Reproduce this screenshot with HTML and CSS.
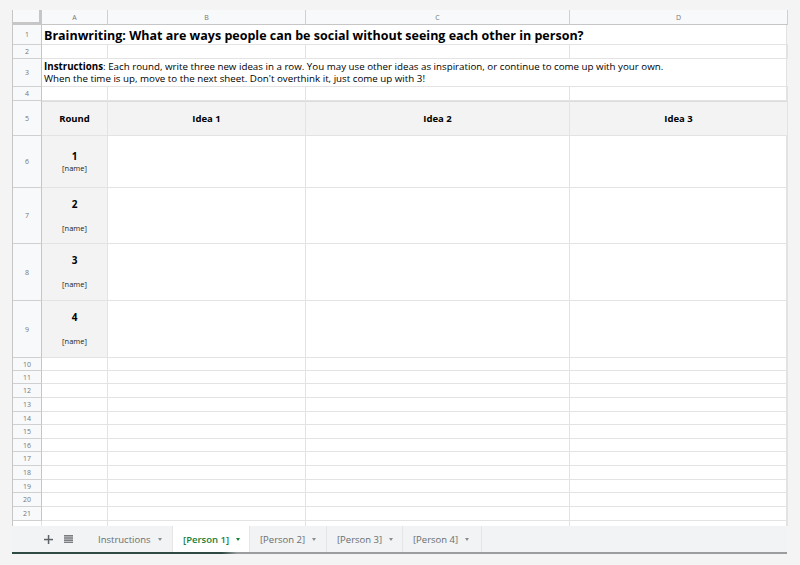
FILE: index.html
```html
<!DOCTYPE html>
<html>
<head>
<meta charset="utf-8">
<link rel="stylesheet" href="styles.css">
</head>
<body>
<div class="sheet">
  <div class="grid">
    <div class="corner"></div>
    <div class="ch">A</div><div class="ch">B</div><div class="ch">C</div><div class="ch">D</div>

    <div class="rh">1</div>
    <div class="c span title">Brainwriting: What are ways people can be social without seeing each other in person?</div>

    <div class="rh">2</div>
    <div class="c"></div><div class="c"></div><div class="c"></div><div class="c"></div>

    <div class="rh">3</div>
    <div class="c span instr"><b>Instructions</b>: Each round, write three new ideas in a row. You may use other ideas as inspiration, or continue to come up with your own.<br>When the time is up, move to the next sheet. Don't overthink it, just come up with 3!</div>

    <div class="rh">4</div>
    <div class="c"></div><div class="c"></div><div class="c"></div><div class="c"></div>

    <div class="rh">5</div>
    <div class="c hd">Round</div><div class="c hd">Idea 1</div><div class="c hd">Idea 2</div><div class="c hd">Idea 3</div>

    <div class="rh">6</div>
    <div class="c rnd"><b>1</b><span>[name]</span></div><div class="c"></div><div class="c"></div><div class="c"></div>

    <div class="rh">7</div>
    <div class="c rnd gap"><b>2</b><span>[name]</span></div><div class="c"></div><div class="c"></div><div class="c"></div>

    <div class="rh">8</div>
    <div class="c rnd gap"><b>3</b><span>[name]</span></div><div class="c"></div><div class="c"></div><div class="c"></div>

    <div class="rh">9</div>
    <div class="c rnd gap"><b>4</b><span>[name]</span></div><div class="c"></div><div class="c"></div><div class="c"></div>

    <div class="rh">10</div><div class="c"></div><div class="c"></div><div class="c"></div><div class="c"></div>
    <div class="rh">11</div><div class="c"></div><div class="c"></div><div class="c"></div><div class="c"></div>
    <div class="rh">12</div><div class="c"></div><div class="c"></div><div class="c"></div><div class="c"></div>
    <div class="rh">13</div><div class="c"></div><div class="c"></div><div class="c"></div><div class="c"></div>
    <div class="rh">14</div><div class="c"></div><div class="c"></div><div class="c"></div><div class="c"></div>
    <div class="rh">15</div><div class="c"></div><div class="c"></div><div class="c"></div><div class="c"></div>
    <div class="rh">16</div><div class="c"></div><div class="c"></div><div class="c"></div><div class="c"></div>
    <div class="rh">17</div><div class="c"></div><div class="c"></div><div class="c"></div><div class="c"></div>
    <div class="rh">18</div><div class="c"></div><div class="c"></div><div class="c"></div><div class="c"></div>
    <div class="rh">19</div><div class="c"></div><div class="c"></div><div class="c"></div><div class="c"></div>
    <div class="rh">20</div><div class="c"></div><div class="c"></div><div class="c"></div><div class="c"></div>
    <div class="rh">21</div><div class="c"></div><div class="c"></div><div class="c"></div><div class="c"></div>

    <div class="f"></div><div class="f"></div><div class="f"></div><div class="f"></div><div class="f"></div>
  </div>
  <div class="tabs">
    <div class="tools">
      <svg class="plus" width="9" height="9" viewBox="0 0 9 9"><rect x="3.8" y="0" width="1.5" height="9" fill="#5f6368"/><rect x="0" y="3.8" width="9" height="1.5" fill="#5f6368"/></svg>
      <svg class="menu" width="9" height="8" viewBox="0 0 9 8"><rect x="0" y="0" width="9" height="1.6" fill="#7a7d80"/><rect x="0" y="2.2" width="9" height="1.6" fill="#7a7d80"/><rect x="0" y="4.4" width="9" height="1.6" fill="#7a7d80"/><rect x="0" y="6.6" width="9" height="1.4" fill="#7a7d80"/></svg>
    </div>
    <div class="tab">Instructions<i class="arr"></i></div>
    <div class="tab active">[Person 1]<i class="arr"></i></div>
    <div class="tab">[Person 2]<i class="arr"></i></div>
    <div class="tab">[Person 3]<i class="arr"></i></div>
    <div class="tab">[Person 4]<i class="arr"></i></div>
  </div>
  <div class="tabline"></div>
</div>
</body>
</html>
```

FILE: styles.css
```css
html, body {
  margin: 0;
  padding: 0;
}
body {
  background: #f4f4f4;
  font-family: "Open Sans", "Liberation Sans", sans-serif;
  color: #000;
}
.sheet {
  margin: 10px 0 0 12px;
  width: 775px;
  background: #fff;
}
.grid {
  display: grid;
  grid-template-columns: 29px 66px 198px 264px 218px;
  grid-template-rows: 15px 20px 14px 28px 14px 35px 52px 56px 57px 57px 13px 13px 14px 14px 13px 14px 13px 14px 14px 13px 14px 14px 5px;
  border-left: 1px solid #c6c6c6;
  border-right: 1px solid #e2e2e2;
  box-sizing: border-box;
}
.grid > div {
  box-sizing: border-box;
  overflow: visible;
}
.corner {
  background: #f8f9fa;
  border-right: 3px solid #c6c6c6;
  border-bottom: 3px solid #c6c6c6;
}
.ch {
  background: #f8f9fa;
  border-right: 1px solid #d0d0d0;
  border-bottom: 1px solid #c6c6c6;
  font-size: 7px;
  color: #777;
  display: flex;
  align-items: center;
  justify-content: center;
}
.rh {
  background: #f8f9fa;
  border-right: 1px solid #c6c6c6;
  border-bottom: 1px solid #d0d0d0;
  font-size: 7px;
  color: #777;
  display: flex;
  align-items: center;
  justify-content: center;
}
.c {
  border-right: 1px solid #e3e3e3;
  border-bottom: 1px solid #e3e3e3;
}
.span {
  grid-column: 2 / 6;
  border-right: none;
}
.title {
  font-weight: 700;
  font-size: 12.5px;
  padding: 1px 0 0 2px;
  white-space: nowrap;
  display: flex;
  align-items: center;
}
.instr {
  font-size: 9.75px;
  line-height: 12px;
  padding: 2px 0 0 2px;
  white-space: nowrap;
}
.hd {
  background: #f3f3f3;
  font-weight: 700;
  font-size: 9.5px;
  display: flex;
  align-items: center;
  justify-content: center;
  border-top: 1px solid #dcdcdc;
}
.rnd {
  background: #f3f3f3;
  display: flex;
  flex-direction: column;
  align-items: center;
  justify-content: center;
  line-height: 12px;
}
.rnd b {
  font-size: 10px;
  font-weight: 700;
}
.rnd span {
  font-size: 7.5px;
  color: #222;
}
.rnd.gap span {
  margin-top: 12px;
}
.f {
  border-right: 1px solid #e3e3e3;
}
.tabs {
  display: flex;
  height: 26px;
  background: #f1f3f4;
  font-size: 9.5px;
  color: #6a6d70;
}
.tabline {
  height: 2px;
  background: linear-gradient(to right, #2f4a42 0, #2f4a42 210px, #9a9c9e 225px, #9a9c9e 100%);
}
.tools {
  width: 76px;
  display: flex;
  align-items: center;
  padding-left: 32px;
  box-sizing: border-box;
  gap: 11px;
}
.tab {
  display: flex;
  align-items: center;
  padding: 0 0 0 10px;
  box-sizing: border-box;
  border-right: 1px solid #e4e6e8;
}
.tab:nth-child(2) { width: 85px; }
.tab:nth-child(3) { width: 77px; }
.tab:nth-child(4) { width: 77px; }
.tab:nth-child(5) { width: 76px; }
.tab:nth-child(6) { width: 79px; }
.tab.active {
  background: #fff;
  color: #188038;
  font-weight: 600;
}
.arr {
  display: inline-block;
  width: 0;
  height: 0;
  margin-left: 7px;
  border-left: 2.5px solid transparent;
  border-right: 2.5px solid transparent;
  border-top: 3px solid #8a8d90;
}
.tab.active .arr {
  border-top-color: #188038;
}
```
